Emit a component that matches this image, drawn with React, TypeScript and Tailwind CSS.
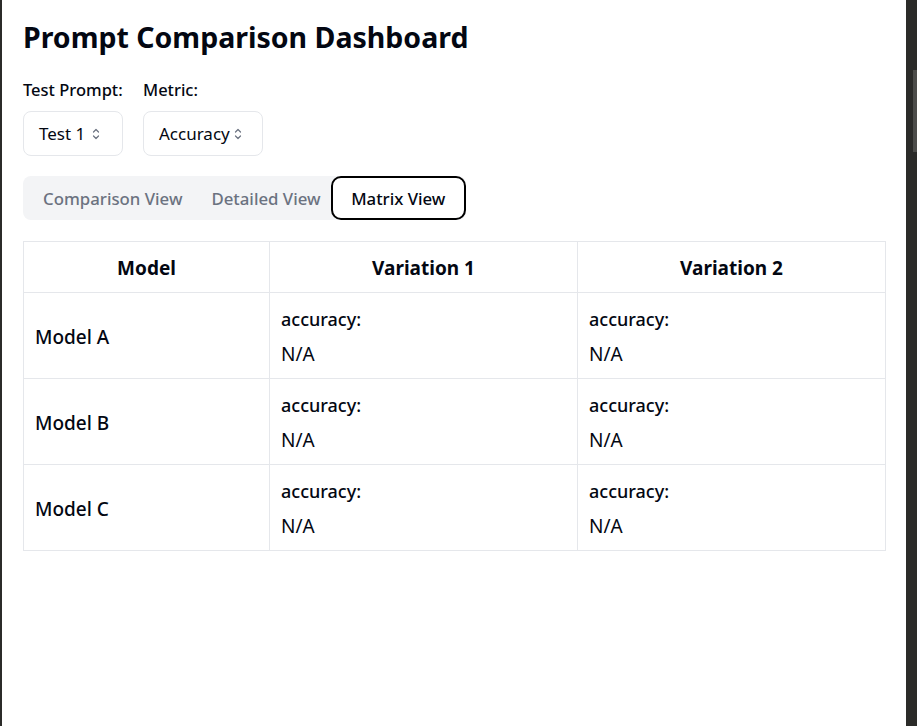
import React from "react";

const Chev = () => (
  <svg width="10" height="14" viewBox="0 0 10 14" fill="none" stroke="#6b7280" strokeWidth="1.2" strokeLinecap="round" strokeLinejoin="round">
    <path d="M2.5 5 L5 2.5 L7.5 5" />
    <path d="M2.5 9 L5 11.5 L7.5 9" />
  </svg>
);

const rows = ["Model A", "Model B", "Model C"];

export default function App() {
  return (
    <div className="flex h-[726px] w-[917px] overflow-hidden bg-[#2b2b29]" style={{ fontFamily: '"Noto Sans", "Open Sans", sans-serif' }}>
      <div className="ml-[2px] h-full w-[904px] bg-white px-[21px] pt-[18px] text-[#030712]">
        <h1 className="text-[28.5px] font-bold leading-[38px]">Prompt Comparison Dashboard</h1>
        <div className="mt-[23px] flex gap-5">
          <div className="flex flex-col">
            <span className="text-[16.5px] font-medium leading-[22px]">Test Prompt:</span>
            <div className="mt-[10px] flex h-[45px] w-[100px] items-center gap-[6px] rounded-lg border border-[#e5e7eb] pl-[15px] text-[17px]">
              <span>Test 1</span>
              <Chev />
            </div>
          </div>
          <div className="flex flex-col">
            <span className="text-[16.5px] font-medium leading-[22px]">Metric:</span>
            <div className="mt-[10px] flex h-[45px] w-[120px] items-center gap-[3px] rounded-lg border border-[#e5e7eb] pl-[15px] text-[17px]">
              <span>Accuracy</span>
              <Chev />
            </div>
          </div>
        </div>
        <div className="mt-[20px] flex h-[44px] w-[443px] items-center rounded-lg bg-[#f3f4f6] pt-[2px] text-[16.8px] font-medium">
          <span className="pl-[20px] pr-[29px] text-[#6b7280]">Comparison View</span>
          <span className="pr-[10px] text-[#6b7280]">Detailed View</span>
          <span className="-mt-[2px] flex h-[44px] flex-1 items-center justify-center rounded-[10px] border-2 border-black bg-white pt-[2px] text-[#030712]">Matrix View</span>
        </div>
        <table className="mt-[21px] w-[863px] border-collapse border border-[#e5e7eb]">
          <thead>
            <tr className="h-[51px]">
              <th className="w-[246px] border border-[#e5e7eb] pt-[2px] text-[19px] font-bold">Model</th>
              <th className="w-[308px] border border-[#e5e7eb] pt-[2px] text-[19px] font-bold">Variation 1</th>
              <th className="w-[308px] border border-[#e5e7eb] pt-[2px] text-[19px] font-bold">Variation 2</th>
            </tr>
          </thead>
          <tbody>
            {rows.map((r) => (
              <tr key={r} className="h-[86px]">
                <td className="border border-[#e5e7eb] px-[11px] pt-[4px] text-[19px] font-medium">{r}</td>
                {[0, 1].map((i) => (
                  <td key={i} className="border border-[#e5e7eb] px-[11px] pt-[12px] pb-[10px] align-top">
                    <div className="text-[18px] font-medium leading-[28px]">accuracy:</div>
                    <div className="mt-[7px] text-[19px] font-normal leading-[28px]">N/A</div>
                  </td>
                ))}
              </tr>
            ))}
          </tbody>
        </table>
      </div>
      <div className="relative h-full flex-1">
        <div className="absolute right-0 top-[70px] h-[82px] w-[4px] bg-[#4d4d4a]" />
      </div>
    </div>
  );
}
